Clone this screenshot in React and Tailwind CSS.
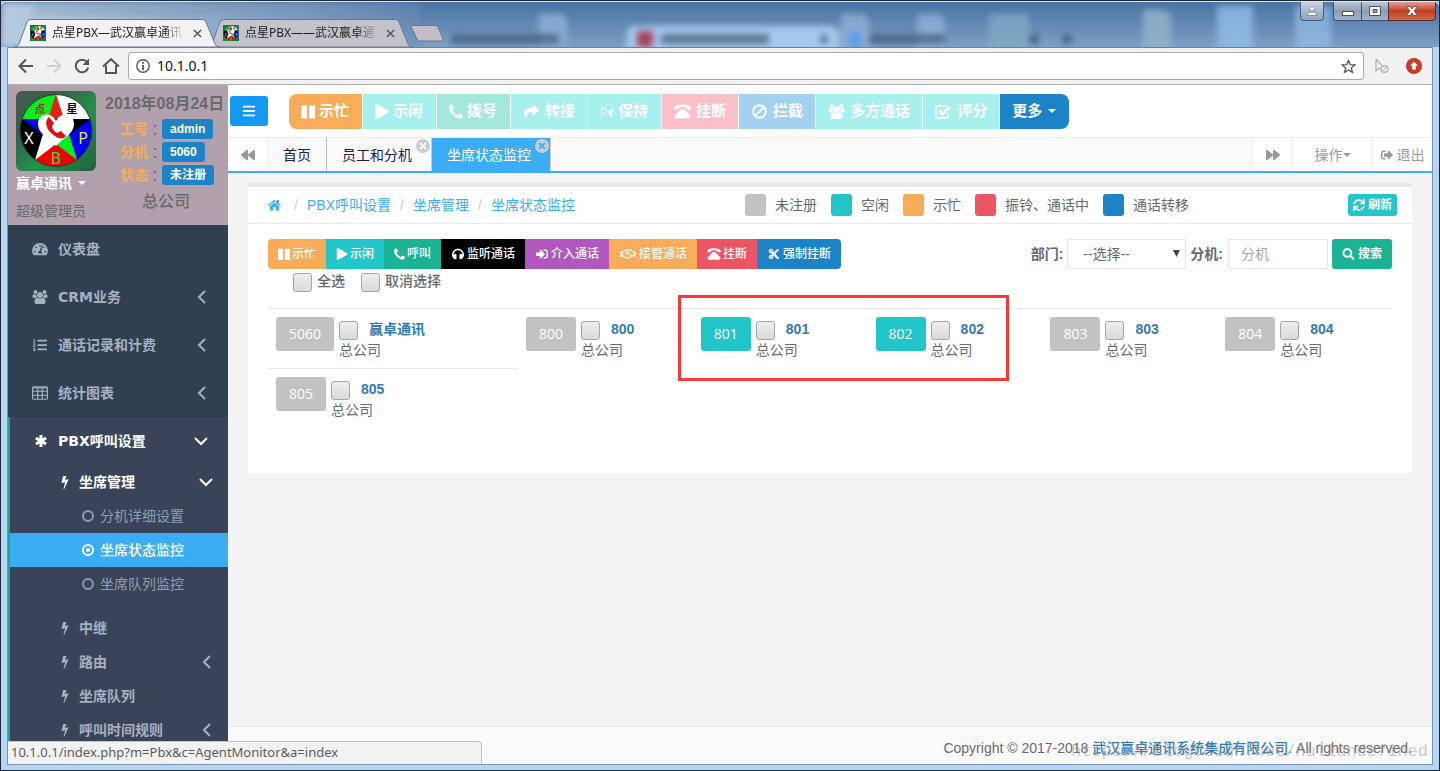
import React from 'react';
import {
  FaBackward,
  FaBars,
  FaCut,
  FaForward,
  FaHeadphones,
  FaListOl,
  FaPlay,
  FaRegHandshake,
  FaSearch,
  FaShare,
  FaSignInAlt,
  FaSignOutAlt,
  FaSync,
  FaTachometerAlt,
  FaTimes,
} from 'react-icons/fa';

function UsersIcon({ className }) {
  return (
    <svg viewBox="0 0 1920 1792" className={className} fill="currentColor" aria-hidden="true">
      <path d="M593 896q-162 5-265 128h-134q-82 0-138-40.5t-56-118.5q0-353 124-353 6 0 43.5 21t97.5 42.5 119 21.5q67 0 133-23-5 37-5 66 0 139 81 256zM1664 1533q0 120-73 189.5t-194 69.5h-874q-121 0-194-69.5t-73-189.5q0-53 3.5-103.5t14-109 26.5-108.5 43-97.5 62-81 85.5-53.5 111.5-20q10 0 43 21.5t73 48 107 48 135 21.5 135-21.5 107-48 73-48 43-21.5q61 0 111.5 20t85.5 53.5 62 81 43 97.5 26.5 108.5 14 109 3.5 103.5zM640 256q0 106-75 181t-181 75-181-75-75-181 75-181 181-75 181 75 75 181zM1344 640q0 159-112.5 271.5t-271.5 112.5-271.5-112.5-112.5-271.5 112.5-271.5 271.5-112.5 271.5 112.5 112.5 271.5zM1920 865q0 78-56 118.5t-138 40.5h-134q-103-123-265-128 81-117 81-256 0-29-5-66 66 23 133 23 59 0 119-21.5t97.5-42.5 43.5-21q124 0 124 353zM1792 256q0 106-75 181t-181 75-181-75-75-181 75-181 181-75 181 75 75 181z" />
    </svg>
  );
}

function BoltIcon({ className }) {
  return (
    <svg viewBox="0 0 896 1792" className={className} fill="currentColor" aria-hidden="true">
      <path d="M885 566q18 20 7 44l-540 1157q-13 25-42 25-4 0-14-2-17-5-25.5-19t-4.5-30l197-808-406 101q-4 1-12 1-18 0-31-11-18-15-13-39l201-825q4-14 16-23t28-9h328q19 0 32 12.5t13 29.5q0 8-5 18l-171 463 396-98q8-2 12-2 19 0 34 15z" />
    </svg>
  );
}

function PhoneIcon({ className }) {
  return (
    <svg viewBox="0 128 1408 1408" className={className} fill="currentColor" aria-hidden="true">
      <path d="M1408 1240q0 27-10 70.5t-21 68.5q-21 50-122 106-94 51-186 51-27 0-53-3.5t-57-12.5-47-14.5-55.5-20.5-49.5-18q-98-35-175-83-127-79-264-216t-216-264q-48-77-83-175-3-9-18-49.5t-20.5-55.5-14.5-47-12.5-57-3.5-53q0-92 51-186 56-101 106-122 25-11 68.5-21t70.5-10q14 0 21 3 18 6 53 76 11 19 30 54t35 63.5 31 53.5q3 4 17.5 25t21.5 35.5 7 28.5q0 20-28.5 50t-62 55-62 53-28.5 46q0 9 5 22.5t8.5 20.5 14 24 11.5 19q76 137 174 235t235 174q2 1 19 11.5t24 14 20.5 8.500 22.5 5q18 0 46-28.5t53-62 55-62 50-28.5q14 0 28.5 7t35.5 21.5 25 17.5q25 15 53.5 31t63.5 35 54 30q70 35 76 53 3 7 3 21z" />
    </svg>
  );
}

function PauseIcon({ className }) {
  return (
    <svg viewBox="0 0 14 14" className={className} fill="currentColor" aria-hidden="true">
      <path d="M0 1H6V14H0ZM8 1H14V14H8Z" />
    </svg>
  );
}

function HomeIcon({ className }) {
  return (
    <svg viewBox="0 0 13 12" className={className} fill="currentColor" aria-hidden="true">
      <path d="M6.500 0.500L9 2.700V1H11V4.500L13 6.300L12.200 7.200L6.500 2.300L0.800 7.200L0 6.300Z" />
      <path d="M6.500 3.400L11 7.300V11.500H7.700V8H5.300V11.500H2V7.300Z" />
    </svg>
  );
}

function AsteriskIcon({ className }) {
  return (
    <svg viewBox="0 0 12 12" className={className} stroke="currentColor" strokeWidth="3" aria-hidden="true">
      <path d="M6 0V12M0.900 3L11.100 9M11.100 3L0.900 9" />
    </svg>
  );
}

function TableIcon({ className }) {
  return (
    <svg viewBox="0 0 14 12" className={className} fill="none" stroke="currentColor" aria-hidden="true">
      <path d="M0.500 1.500Q0.500 0.500 1.500 0.500H12.500Q13.500 0.500 13.500 1.500V10.500Q13.500 11.500 12.500 11.500H1.500Q0.500 11.500 0.500 10.500Z" />
      <path d="M0.500 1.500H13.500M0.500 4.500H13.500M0.500 8H13.500M5 1V11.500M9 1V11.500" />
    </svg>
  );
}

function CircleIcon({ dot, className }) {
  return (
    <svg viewBox="0 0 12 12" className={className} aria-hidden="true">
      <circle cx="6" cy="6" r="5" fill="none" stroke="currentColor" strokeWidth="2" />
      {dot && <circle cx="6" cy="6" r="2" fill="currentColor" />}
    </svg>
  );
}

function BanIcon({ className }) {
  return (
    <svg viewBox="0 0 15 15" className={className} fill="none" stroke="currentColor" strokeWidth="2" aria-hidden="true">
      <circle cx="7.500" cy="7.500" r="6.300" />
      <path d="M3.200 11.800L11.800 3.200" />
    </svg>
  );
}

function CheckBoxIcon({ className }) {
  return (
    <svg viewBox="0 0 16 14" className={className} fill="none" stroke="currentColor" aria-hidden="true">
      <path d="M12.500 8.500V11Q12.500 13 10.500 13H3Q1 13 1 11V4Q1 2 3 2H11" strokeWidth="1.600" />
      <path d="M4 6L7.200 9.300L14.500 2.500" strokeWidth="2.600" />
    </svg>
  );
}

function DeskPhoneIcon({ className }) {
  return (
    <svg viewBox="0 0 17 14" className={className} fill="currentColor" aria-hidden="true">
      <path d="M1 5Q0 5 0 4V3Q2 0 8.500 0T17 3V4Q17 5 16 5H13.500Q12.500 5 12.500 4V3.300Q10.500 2.500 8.500 2.500T4.500 3.300V4Q4.500 5 3.500 5Z" />
      <path d="M6.500 4.800H10.500L16 11V13Q16 14 15 14H2Q1 14 1 13V11Z" />
    </svg>
  );
}

function HoldIcon({ className }) {
  return (
    <svg viewBox="0 0 18 16" className={className} aria-hidden="true">
      <path d="M3 1L9.500 7L1.500 13Z" fill="none" stroke="currentColor" strokeWidth="1.200" />
      <path d="M9.500 8L17.500 3.500L14.500 15.500Z" fill="currentColor" />
      <path d="M9 7L16 15" stroke="currentColor" />
    </svg>
  );
}

function Chevron({ down, className }) {
  return (
    <svg viewBox="0 0 14 14" className={className} fill="none" stroke="currentColor" strokeWidth="2" aria-hidden="true">
      <path d={down ? 'M1 4L7 10L13 4' : 'M11 1L5 7L11 13'} />
    </svg>
  );
}

function Caret({ className }) {
  return (
    <svg viewBox="0 0 8 4" className={`h-1 w-2 ${className || ''}`} fill="currentColor" aria-hidden="true">
      <path d="M0 0H8L4 4Z" />
    </svg>
  );
}

function Logo({ id, className }) {
  return (
    <svg viewBox="0 0 80 80" className={className} role="img" aria-label="点星PBX">
      <defs>
        <linearGradient id={`${id}-bg`} x1="0" y1="0" x2="1" y2="1">
          <stop offset="0" stopColor="#4a5a50" />
          <stop offset="0.300" stopColor="#35604a" />
          <stop offset="0.600" stopColor="#229447" />
          <stop offset="1" stopColor="#20603f" />
        </linearGradient>
        <clipPath id={`${id}-disc`}>
          <circle cx="40" cy="39.500" r="36" />
        </clipPath>
      </defs>
      <rect width="80" height="80" fill={`url(#${id}-bg)`} />
      <g clipPath={`url(#${id}-disc)`}>
        <path d="M40 40L6 28L-10 24L0 0H40Z" fill="#00f01e" />
        <path d="M40 40L74 28L90 24L80 0H40Z" fill="#fff" />
        <path d="M40 40L74 28L90 24V80H68L61 69Z" fill="#0000f5" />
        <path d="M40 40L6 28L-10 24V80H12L19 69Z" fill="#000" />
        <path d="M40 40L19 69L12 80H68L61 69Z" fill="#f00000" />
        <path d="M40 3L32 28H48Z" fill="#e8201c" />
        <path d="M74 28H40V40L53 44Z" fill="#000" />
        <path d="M61 69L53 43L40 40V53Z" fill="#00f01e" />
        <path d="M19 69L27 43L40 40V53Z" fill="#fff" />
        <path d="M6 28H40V40L27 44Z" fill="#0000f5" />
      </g>
      <circle cx="40" cy="39.500" r="36" fill="none" stroke="#2b3b33" />
      <path d="M40 55C33 47 22 43 22 33C22 22 35 20 40 30C45 20 58 22 58 33C58 43 47 47 40 55Z" fill="#fff" />
      <path
        d="M33 26C29 29 29 36 35 42C41 48 47 49 50 45L45 40L41 42C39 41 36 38 36 35L38 32Z"
        fill="#e01010"
      />
      <g fontFamily="'Noto Sans','Noto Sans CJK SC',sans-serif" textAnchor="middle">
        <text x="24" y="22" fontSize="11" fontWeight="bold" fill="#e01010">点</text>
        <text x="56" y="22" fontSize="11" fontWeight="bold" fill="#000">星</text>
        <text x="13" y="53" fontSize="16" fill="#fff">X</text>
        <text x="67" y="53" fontSize="16" fill="#e8e820">P</text>
        <text x="40" y="73" fontSize="16" fill="#20e040">B</text>
      </g>
    </svg>
  );
}

const callButtons = [
  { label: '示忙', Icon: PauseIcon, color: 'bg-[#f8ac59] rounded-l-lg' },
  { label: '示闲', Icon: FaPlay, color: 'bg-[#a7f0ee]' },
  { label: '拨号', Icon: PhoneIcon, color: 'bg-[#a3e8d8]' },
  { label: '转接', Icon: FaShare, color: 'bg-[#a7f0ee]', big: true },
  { label: '保持', Icon: HoldIcon, color: 'bg-[#a7f0ee]' },
  { label: '挂断', Icon: DeskPhoneIcon, color: 'bg-[#f9c0c7]', big: true },
  { label: '拦截', Icon: BanIcon, color: 'bg-[#a4d1ef]', big: true },
  { label: '多方通话', Icon: UsersIcon, color: 'bg-[#a7f0ee]', big: true },
  { label: '评分', Icon: CheckBoxIcon, color: 'bg-[#a7f0ee]', big: true },
];

const actionButtons = [
  { label: '示忙', Icon: PauseIcon, color: 'bg-[#f8ac59] rounded-l-sm', size: 'w-3' },
  { label: '示闲', Icon: FaPlay, color: 'bg-[#23c6c8]', size: 'w-3' },
  { label: '呼叫', Icon: PhoneIcon, color: 'bg-[#1ab394]', size: 'w-[11px]' },
  { label: '监听通话', Icon: FaHeadphones, color: 'bg-black', size: 'w-[14px]' },
  { label: '介入通话', Icon: FaSignInAlt, color: 'bg-[#b058bd]', size: 'w-[14px]' },
  { label: '接管通话', Icon: FaRegHandshake, color: 'bg-[#f8ac59]', size: 'w-[18px]' },
  { label: '挂断', Icon: DeskPhoneIcon, color: 'bg-[#ed5565]', size: 'w-[14px]' },
  { label: '强制挂断', Icon: FaCut, color: 'bg-[#1c84c6] rounded-r-sm', size: 'w-[14px]' },
];

const legend = [
  { label: '未注册', color: 'bg-[#c2c2c2]' },
  { label: '空闲', color: 'bg-[#23c6c8]' },
  { label: '示忙', color: 'bg-[#f8ac59]' },
  { label: '振铃、通话中', color: 'bg-[#ed5565]' },
  { label: '通话转移', color: 'bg-[#1c84c6]' },
];

const agentRows = [
  [
    { ext: '5060', name: '赢卓通讯' },
    { ext: '800', name: '800' },
    { ext: '801', name: '801', idle: true },
    { ext: '802', name: '802', idle: true },
    { ext: '803', name: '803' },
    { ext: '804', name: '804' },
  ],
  [{ ext: '805', name: '805' }],
];

const checkboxClass =
  'block h-[19px] w-[19px] shrink-0 appearance-none rounded-[3px] border border-[#a6a6a6] bg-gradient-to-b from-[#eeeeee] to-[#dadada]';

function BrowserTab({ id, title, active }) {
  return (
    <div className={`relative -mr-[13px] flex h-7 w-[206px] items-center px-4 ${active ? 'z-10' : ''}`}>
      <svg
        viewBox="0 0 206 28"
        preserveAspectRatio="none"
        className="absolute inset-0 h-full w-full"
        aria-hidden="true"
      >
        <path
          d="M0 28C3 28 4 27 5 25L13 3Q14 0.500 17 0.500H188Q191 0.500 192 3L201 25Q202 28 206 28Z"
          fill={active ? '#f2f2f2' : '#c3c4cb'}
          stroke="#66788f"
        />
      </svg>
      <Logo id={id} className="relative h-4 w-4 shrink-0" />
      <span className="relative ml-[6px] w-[132px] text-xs whitespace-nowrap text-[#222] [mask-image:linear-gradient(to_right,black_85%,transparent)]">
        {title}
      </span>
      <button type="button" aria-label="关闭标签页" className="relative ml-[9px] text-[#555]">
        <svg viewBox="0 0 10 10" className="h-[9px] w-[9px]" stroke="currentColor" strokeWidth="1.600">
          <path d="M1 1L9 9M9 1L1 9" />
        </svg>
      </button>
    </div>
  );
}

function TitleBar() {
  return (
    <header className="relative flex h-[46px] shrink-0 items-end justify-between overflow-hidden rounded-t-md border-t border-[#dce9f5] bg-gradient-to-b from-[#4a72a3] to-[#7d9fc5] font-['Noto_Sans','Noto_Sans_CJK_SC',sans-serif]">
      {/* windows showing through the glass */}
      <div className="absolute inset-0 blur-[3px]" aria-hidden="true">
        <div className="absolute top-0 left-0 h-full w-[420px] bg-gradient-to-r from-[#b8cbe0] to-[#6d8fb7]/40" />
        <div className="absolute top-1 left-8 h-2 w-[300px] bg-[#7990aa]/40" />
        <div className="absolute top-3 left-[538px] h-9 w-7 rounded-tr-lg bg-[#86abd1]" />
        <div className="absolute top-6 left-[626px] h-8 w-[212px] rounded-t-lg bg-[#a5c8ee]" />
        <div className="absolute top-[29px] left-[636px] h-4 w-4 bg-[#a8435e]" />
        <div className="absolute top-[32px] left-[450px] h-[10px] w-[108px] bg-[#3f5874]/70" />
        <div className="absolute top-[32px] left-[660px] h-[10px] w-[108px] bg-[#40556e]/70" />
        <div className="absolute top-[33px] left-[819px] h-2 w-2 bg-[#5d7a9b]" />
        <div className="absolute top-3 left-[840px] h-9 w-7 rounded-tr-lg bg-[#94b8dc]/70" />
        <div className="absolute top-3 left-[916px] h-9 w-7 rounded-tr-lg bg-[#94b8dc]/70" />
        <div className="absolute top-[30px] left-[848px] h-4 w-3 bg-[#5f9bea]" />
        <div className="absolute top-[32px] left-[868px] h-[10px] w-[76px] bg-[#3f5874]/70" />
        <div className="absolute top-3 left-[988px] h-9 w-10 bg-[#83adc6]/70" />
        <div className="absolute top-[33px] left-[1029px] h-2 w-2 bg-[#405a78]" />
        <div className="absolute top-[33px] left-[1062px] h-2 w-2 bg-[#405a78]" />
        <div className="absolute top-2 left-[1142px] h-10 w-7 rounded-tr-lg bg-[#93b5cc]/80" />
        <div className="absolute top-1 left-[1216px] h-11 w-9 bg-[#94bde8]/80" />
        <div className="absolute top-1 left-[1294px] h-11 w-9 bg-[#94bde8]/70" />
      </div>
      <div className="relative flex items-end pl-[13px]">
        <BrowserTab id="tab1" title="点星PBX—武汉赢卓通讯" active />
        <BrowserTab id="tab2" title="点星PBX——武汉赢卓通" />
        <button type="button" aria-label="新标签页" className="mb-[5px] ml-[10px]">
          <svg viewBox="0 0 34 17" className="h-[17px] w-[34px]">
            <path d="M1 1.500Q1 0.500 3 0.500H25Q27 0.500 28 2L33 14Q33 16 31 16H10Q8 16 7 14Z" fill="#c3bcc4" stroke="#66788f" />
          </svg>
        </button>
      </div>
      <div className="relative flex self-start pr-[3px] text-white">
        <button
          type="button"
          aria-label="用户"
          className="mr-[9px] flex h-[19px] w-6 items-center justify-center rounded-b border border-t-0 border-[#4b5f78] bg-gradient-to-b from-[#c9d4e2] to-[#8ba2bd]"
        >
          <svg viewBox="0 0 10 10" className="h-[10px] w-[10px]" fill="#fff" stroke="#555f70" strokeWidth="0.600">
            <circle cx="5" cy="2.800" r="2.300" />
            <path d="M0.500 9.500V8Q1 6 5 6T9.500 8V9.500Z" />
          </svg>
        </button>
        <button
          type="button"
          aria-label="最小化"
          className="flex h-[19px] w-[29px] items-center justify-center rounded-bl border border-t-0 border-[#42526a] bg-gradient-to-b from-[#b9c8da] via-[#8c9db3] to-[#9fb2cb]"
        >
          <svg viewBox="0 0 12 5" className="mt-1 h-[5px] w-3">
            <rect x="0.500" y="0.500" width="11" height="4" fill="#fff" stroke="#4b5466" />
          </svg>
        </button>
        <button
          type="button"
          aria-label="最大化"
          className="flex h-[19px] w-[26px] items-center justify-center border-b border-[#42526a] bg-gradient-to-b from-[#b9c8da] via-[#8c9db3] to-[#9fb2cb]"
        >
          <svg viewBox="0 0 12 10" className="h-[10px] w-3">
            <path d="M0.500 0.500H11.500V9.500H0.500ZM4 3.500V6.500H8V3.500Z" fill="#fff" fillRule="evenodd" stroke="#4b5466" />
          </svg>
        </button>
        <button
          type="button"
          aria-label="关闭"
          className="flex h-[19px] w-12 items-center justify-center rounded-br border border-t-0 border-[#5c2a2a] bg-gradient-to-b from-[#dfa093] via-[#c23b22] to-[#cf6b4c]"
        >
          <svg viewBox="0 0 12 10" className="h-[10px] w-3" stroke="#5a3a3a" strokeWidth="0.700">
            <path d="M0.500 0.500H4L6 3L8 0.500H11.500L8 5L11.500 9.500H8L6 7L4 9.500H0.500L4 5Z" fill="#fff" />
          </svg>
        </button>
      </div>
    </header>
  );
}

function AddressBar() {
  return (
    <div className="flex h-[38px] shrink-0 items-center border-t border-b border-t-[#6e8096] border-b-[#b0b0b0] bg-[#f1f1f1] pr-[10px] pl-[10px] font-['Noto_Sans',sans-serif] text-[#555]">
      <button type="button" aria-label="后退" className="mr-3">
        <svg viewBox="0 0 16 16" className="h-4 w-4" fill="none" stroke="currentColor" strokeWidth="2">
          <path d="M15 8H2M8 1.500L1.500 8L8 14.500" />
        </svg>
      </button>
      <button type="button" aria-label="前进" className="mr-3 text-[#d0d0d0]">
        <svg viewBox="0 0 16 16" className="h-4 w-4" fill="none" stroke="currentColor" strokeWidth="2">
          <path d="M1 8H14M8 1.500L14.500 8L8 14.500" />
        </svg>
      </button>
      <button type="button" aria-label="重新加载" className="mr-3">
        <svg viewBox="0 0 16 16" className="h-4 w-4" fill="none" stroke="currentColor" strokeWidth="2">
          <path d="M13 4A6.300 6.300 0 1 0 14.200 9.500" />
          <path d="M15 0.500V7H8.500Z" fill="currentColor" stroke="none" />
        </svg>
      </button>
      <button type="button" aria-label="主页" className="mr-2">
        <svg viewBox="0 0 18 16" className="h-4 w-[18px]" fill="none" stroke="currentColor" strokeWidth="2">
          <path d="M1 8.500L9 1.200L17 8.500M4 7.500V15H14V7.500" />
        </svg>
      </button>
      <div className="flex h-7 flex-1 items-center rounded-[3px] border border-[#a9a9a9] bg-white px-[7px]">
        <svg viewBox="0 0 14 14" className="h-[14px] w-[14px] shrink-0" fill="none" stroke="currentColor" strokeWidth="1.400">
          <circle cx="7" cy="7" r="6.200" />
          <path d="M7 3V4.800M7 6V11" strokeWidth="1.800" />
        </svg>
        <input
          aria-label="地址"
          defaultValue="10.1.0.1"
          className="ml-[7px] min-w-0 flex-1 text-sm text-[#111] outline-none"
        />
        <button type="button" aria-label="收藏">
          <svg viewBox="0 0 16 16" className="h-[15px] w-[15px]" fill="none" stroke="currentColor" strokeWidth="1.400">
            <path d="M8 1.500L9.900 5.900L14.700 6.300L11 9.500L12.200 14.200L8 11.700L3.800 14.200L5 9.500L1.300 6.300L6.100 5.900Z" />
          </svg>
        </button>
      </div>
      <svg viewBox="0 0 16 16" className="ml-[10px] h-4 w-4 text-[#b5b5b5]" fill="none" stroke="currentColor" aria-hidden="true">
        <path d="M2 1V13L5 10L6 12M2 1L8 8" strokeWidth="1.300" />
        <circle cx="10.500" cy="11" r="3.300" strokeWidth="1.400" />
        <path d="M8.500 13L12.500 9" />
      </svg>
      <svg viewBox="0 0 16 16" className="ml-4 h-4 w-4" aria-hidden="true">
        <circle cx="8" cy="8" r="8" fill="#c93a28" />
        <path d="M8 3.500L12 8H9.800V11.500H6.200V8H4Z" fill="#fff" />
      </svg>
    </div>
  );
}

function SideItem({ Icon, label, arrow }) {
  return (
    <a href="#" className="flex h-12 items-center pr-5 pl-6">
      <Icon className="h-[14px] w-4 shrink-0" />
      <span className="ml-[10px] flex-1">{label}</span>
      {arrow && <Chevron className="h-[14px] w-[14px]" />}
    </a>
  );
}

function SubItem({ label, arrow, open }) {
  return (
    <a href="#" className={`flex h-[34px] items-center pr-[15px] pl-[51px] ${open ? 'text-white' : ''}`}>
      <BoltIcon className="h-[14px] w-2 shrink-0" />
      <span className="ml-[10px] flex-1">{label}</span>
      {arrow && <Chevron down={open} className="h-[14px] w-[14px]" />}
    </a>
  );
}

function LeafItem({ label, active }) {
  return (
    <a
      href="#"
      className={`flex h-[34px] items-center gap-[6px] pl-[72px] ${active ? 'bg-[#3aadf5] font-medium text-white' : 'font-normal text-[#8f9db3]'}`}
    >
      <CircleIcon dot={active} className="h-3 w-3" />
      {label}
    </a>
  );
}

function InfoRow({ label, value }) {
  return (
    <div className="flex h-[23px] items-center pl-[15px] text-sm">
      <span className="font-bold text-[#f8ac59]">{label}</span>
      <span className="font-['Noto_Sans_CJK_TC',sans-serif]">：</span>
      <span className="flex h-5 items-center rounded-[3px] bg-[#1c84c6] px-2 text-xs font-bold text-white">{value}</span>
    </div>
  );
}

function Sidebar() {
  return (
    <aside className="w-[220px] shrink-0 overflow-hidden bg-[#2f4050] text-sm font-bold text-[#a7b1c2]">
      <div className="flex h-[140px] bg-[#b0a1ad] pl-2 font-normal text-[#676a6c]">
        <div className="w-20 shrink-0 pt-[6px]">
          <Logo id="avatar" className="h-20 w-20 rounded-md" />
          <button type="button" className="flex h-6 items-center gap-[6px] font-bold whitespace-nowrap text-white">
            赢卓通讯 <Caret />
          </button>
          <div className="mt-1 leading-6">超级管理员</div>
        </div>
        <div className="flex-1 pt-2 pl-[9px]">
          <div className="mb-[2px] text-base leading-[22px] font-bold whitespace-nowrap">2018年08月24日</div>
          <InfoRow label="工号" value="admin" />
          <InfoRow label="分机" value="5060" />
          <InfoRow label="状态" value="未注册" />
          <div className="mt-1 pl-[37px] text-base leading-6 font-medium">总公司</div>
        </div>
      </div>
      <nav className="font-['DejaVu_Sans','Noto_Sans_CJK_SC',sans-serif]">
        <SideItem Icon={FaTachometerAlt} label="仪表盘" />
        <SideItem Icon={UsersIcon} label="CRM业务" arrow />
        <SideItem Icon={FaListOl} label="通话记录和计费" arrow />
        <SideItem Icon={TableIcon} label="统计图表" arrow />
        <div className="border-l-2 border-[#19aa8d] bg-[#3a4459] pb-10">
          <a href="#" className="flex h-12 items-center pr-5 pl-6 text-white">
            <AsteriskIcon className="h-3 w-[14px] shrink-0" />
            <span className="ml-[10px] flex-1">PBX呼叫设置</span>
            <Chevron down className="h-[14px] w-[14px]" />
          </a>
          <SubItem label="坐席管理" arrow open />
          <div className="mb-[10px]">
            <LeafItem label="分机详细设置" />
            <LeafItem label="坐席状态监控" active />
            <LeafItem label="坐席队列监控" />
          </div>
          <SubItem label="中继" />
          <SubItem label="路由" arrow />
          <SubItem label="坐席队列" />
          <SubItem label="呼叫时间规则" arrow />
        </div>
      </nav>
    </aside>
  );
}

function CallBar() {
  return (
    <div className="flex h-[52px] shrink-0 items-center bg-white pl-[2px]">
      <button
        type="button"
        aria-label="菜单"
        className="mr-[21px] flex h-[30px] w-[38px] items-center justify-center rounded-[3px] bg-[#1499f1] text-white"
      >
        <FaBars className="h-[14px] w-[14px]" />
      </button>
      <div className="flex h-[35px] gap-px text-[15px] font-bold text-white">
        {callButtons.map(({ label, Icon, color, big }) => (
          <button
            key={label}
            type="button"
            className={`flex items-center pl-3 whitespace-nowrap ${big ? 'gap-[5px] pr-3' : 'gap-1 pr-[13px]'} ${color}`}
          >
            <Icon className={`h-[15px] ${big ? 'w-[17px]' : 'w-[14px]'}`} />
            {label}
          </button>
        ))}
        <button type="button" className="flex items-center gap-[6px] rounded-r-lg bg-[#1c84c6] pr-[13px] pl-3">
          更多 <Caret />
        </button>
      </div>
    </div>
  );
}

function PageTabs() {
  return (
    <div className="flex h-9 shrink-0 border-t border-b-2 border-t-[#e7eaec] border-b-[#3aadf5] bg-[#fafafa] text-sm text-[#999]">
      <button type="button" aria-label="向左" className="flex w-10 items-center justify-center border-r border-[#eee] bg-white">
        <FaBackward className="h-[14px] w-[14px]" />
      </button>
      <a href="#" className="flex items-center border-r border-[#bbb] px-[15px] text-[#23184f]">
        首页
      </a>
      <a href="#" className="relative flex items-center border-r border-[#ccc] pr-[19px] pl-[15px] text-[#23184f]">
        员工和分机
        <span className="absolute top-px right-px flex h-[14px] w-[14px] items-center justify-center rounded-full bg-[#ccc] text-white">
          <FaTimes className="h-[10px] w-[10px]" />
        </span>
      </a>
      <a href="#" className="relative flex items-center border-r border-[#ccc] bg-[#3aadf5] pr-[19px] pl-[15px] text-white">
        坐席状态监控
        <span className="absolute top-px right-px flex h-[14px] w-[14px] items-center justify-center rounded-full bg-[#ccc] text-[#3aadf5]">
          <FaTimes className="h-[10px] w-[10px]" />
        </span>
      </a>
      <div className="flex-1" />
      <button type="button" aria-label="向右" className="flex w-10 items-center justify-center border-l border-[#eee] bg-white">
        <FaForward className="h-[14px] w-[14px]" />
      </button>
      <button type="button" className="flex w-20 items-center justify-center border-l border-[#eee] bg-white">
        操作
        <Caret />
      </button>
      <button type="button" className="flex w-[60px] items-center justify-center gap-1 border-l border-[#eee] bg-white whitespace-nowrap">
        <FaSignOutAlt className="h-3 w-3" />
        退出
      </button>
    </div>
  );
}

function Crumb({ children }) {
  return (
    <>
      <span className="w-[22px] text-center text-[#ccc]">/</span>
      <a href="#" className="text-[#3aadf5]">
        {children}
      </a>
    </>
  );
}

function AgentCell({ agent }) {
  return (
    <td className="h-[60px] border-t border-[#e7e7e7] px-2 pt-2 align-top">
      <div className="flex gap-[5px]">
        <button
          type="button"
          className={`h-[34px] rounded-[3px] px-[13px] font-['Open_Sans',sans-serif] text-white ${agent.idle ? 'bg-[#23c6c8]' : 'bg-[#c2c2c2]'}`}
        >
          {agent.ext}
        </button>
        <div>
          <div className="flex h-6 gap-[11px]">
            <input type="checkbox" id={`agent-${agent.ext}`} aria-label={agent.name} className={`mt-1 ${checkboxClass}`} />
            <label htmlFor={`agent-${agent.ext}`} className="leading-6 font-bold whitespace-nowrap text-[#337ab7]">
              {agent.name}
            </label>
          </div>
          <div className="leading-[18px]">总公司</div>
        </div>
      </div>
    </td>
  );
}

function MonitorPanel() {
  return (
    <section className="mx-5 mt-[10px] h-[290px] border-t-4 border-[#e4e9ed] bg-white text-sm">
      <div className="flex h-[37px] items-center border-b border-[#e7eaec] pr-[15px] pl-5">
        <nav className="flex w-[477px] items-center">
          <a href="#" aria-label="首页" className="mr-1 text-[#3aadf5]">
            <HomeIcon className="h-3 w-[13px]" />
          </a>
          <Crumb>PBX呼叫设置</Crumb>
          <Crumb>坐席管理</Crumb>
          <Crumb>坐席状态监控</Crumb>
        </nav>
        <ul className="flex flex-1 gap-[14px] whitespace-nowrap">
          {legend.map((item) => (
            <li key={item.label} className="flex items-center gap-[9px]">
              <span className={`h-[22px] w-[21px] rounded-[3px] ${item.color}`} />
              {item.label}
            </li>
          ))}
        </ul>
        <button type="button" className="flex h-[22px] items-center gap-[3px] rounded-[3px] bg-[#23c6c8] px-[5px] text-xs font-bold text-white">
          <FaSync className="h-3 w-3" />
          刷新
        </button>
      </div>

      <div className="px-5 pt-[15px]">
        <div className="flex items-start justify-between">
          <div>
            <div className="flex h-[30px] text-xs font-medium text-white">
              {actionButtons.map(({ label, Icon, color, size }) => (
                <button key={label} type="button" className={`flex items-center gap-[2px] px-[10px] whitespace-nowrap ${color}`}>
                  <Icon className={`h-3 ${size}`} />
                  {label}
                </button>
              ))}
            </div>
            <div className="flex pt-1 pl-[25px] font-medium">
              <input type="checkbox" id="check-all" className={checkboxClass} />
              <label htmlFor="check-all" className="mr-4 ml-[5px] leading-4">
                全选
              </label>
              <input type="checkbox" id="check-none" className={checkboxClass} />
              <label htmlFor="check-none" className="ml-[5px] leading-4">
                取消选择
              </label>
            </div>
          </div>
          <form className="flex h-[30px] items-center">
            <label htmlFor="dept" className="mr-1 font-bold">
              部门:
            </label>
            <div className="relative mr-1">
              <select id="dept" className="block h-[30px] w-[119px] appearance-none border border-[#e5e6e7] bg-white pl-[15px]">
                <option>--选择--</option>
              </select>
              <svg
                viewBox="0 0 7 7"
                className="pointer-events-none absolute top-[11px] right-[6px] h-[7px] w-[7px]"
                fill="#444"
                aria-hidden="true"
              >
                <path d="M0 0H7L3.500 7Z" />
              </svg>
            </div>
            <label htmlFor="ext" className="mr-[5px] font-bold">
              分机:
            </label>
            <input
              id="ext"
              placeholder="分机"
              className="mr-1 h-[30px] w-[100px] border border-[#e5e6e7] px-3 placeholder:text-[#a5a5a5]"
            />
            <button type="button" className="flex h-[30px] items-center gap-[3px] rounded-[3px] bg-[#1ab394] px-[10px] text-xs font-bold text-white">
              <FaSearch className="h-3 w-[13px]" />
              搜索
            </button>
          </form>
        </div>

        <div className="relative mt-4">
          <table className="w-full table-fixed">
            <colgroup>
              <col className="w-[250px]" />
              <col />
              <col />
              <col />
              <col />
              <col />
            </colgroup>
            <tbody>
              {agentRows.map((row) => (
                <tr key={row[0].ext}>
                  {row.map((agent) => (
                    <AgentCell key={agent.ext} agent={agent} />
                  ))}
                </tr>
              ))}
            </tbody>
          </table>
          <div className="pointer-events-none absolute -top-[13px] left-[410px] h-[86px] w-[331px] border-[3px] border-[#fb3838]" />
        </div>
      </div>
    </section>
  );
}

export default function App() {
  return (
    <div className="flex h-screen flex-col overflow-hidden border border-[#1d2433] bg-[#b5d5f5] font-['Liberation_Sans','Noto_Sans_CJK_SC',sans-serif] text-[#676a6c]">
      <TitleBar />
      <div className="mr-[6px] mb-[5px] ml-[6px] flex min-h-0 flex-1 flex-col border-x border-b border-[#7c93ad]">
        <AddressBar />
        <div className="relative flex min-h-0 flex-1">
          <Sidebar />
          <main className="flex min-w-0 flex-1 flex-col bg-[#f3f3f4]">
            <CallBar />
            <PageTabs />
            <div className="min-h-0 flex-1">
              <MonitorPanel />
            </div>
            <footer className="relative flex h-[38px] shrink-0 items-center justify-end border-t border-[#e7eaec] bg-[#fafafa] pt-1 pr-5 text-sm">
              <p>
                Copyright © 2017-2018{' '}
                <a href="#" className="font-medium text-[#337ab7]">
                  武汉赢卓通讯系统集成有限公司
                </a>
                . All rights reserved.
              </p>
              <span className="pointer-events-none absolute right-1 bottom-0 font-['Liberation_Mono',monospace] text-[17px] leading-6 text-[#999]/50">
                https://blog.csdn.net/nullundefined
              </span>
            </footer>
          </main>
          <div className="absolute bottom-0 left-0 flex h-[23px] w-[474px] items-center rounded-tr border-t border-r border-[#c4c4c4] bg-[#f2f2f2] pl-[3px] font-['Noto_Sans',sans-serif] text-[13px] text-[#5c5c5c]">
            10.1.0.1/index.php?m=Pbx&amp;c=AgentMonitor&amp;a=index
          </div>
        </div>
      </div>
    </div>
  );
}
